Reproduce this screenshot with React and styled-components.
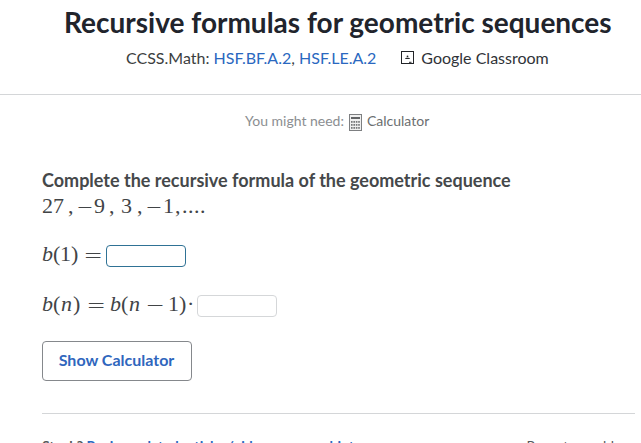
import React from 'react';
import styled, { createGlobalStyle } from 'styled-components';

const GlobalStyle = createGlobalStyle`
* {
  box-sizing: border-box;
}
body {
  margin: 0;
  background: #fff;
  overflow: hidden;
  font-family: Lato, sans-serif;
}
`;

const Page = styled.div`
height: 443px;
overflow: hidden;
color: #3b3e40;
`;

const Header = styled.header`
height: 95px;
padding-left: 64px;
border-bottom: 1px solid #d4d6d8;
white-space: nowrap;
`;

const Title = styled.h1`
margin: 0;
padding-top: 4px;
font-size: 28px;
font-weight: 700;
line-height: 36px;
color: #21242c;
`;

const Meta = styled.div`
display: flex;
align-items: center;
margin: 8px 0 0 62px;
font-size: 16px;
line-height: 20px;
`;

const Link = styled.a`
color: #2a68c0;
text-decoration: none;
`;

const Classroom = styled.div`
display: flex;
align-items: center;
gap: 6px;
margin-left: 24px;
color: #303338;
`;

const Need = styled.div`
display: flex;
align-items: center;
height: 20px;
margin: 17px 0 0 245px;
font-size: 14px;
line-height: 18px;
white-space: nowrap;
color: #8b8e91;
`;

const Tool = styled.span`
display: flex;
align-items: center;
gap: 5px;
margin-left: 4px;
color: #6b6e70;
`;

const Label = styled.span`
padding-bottom: 2px;
`;

const Exercise = styled.main`
padding-left: 42px;
`;

const Prompt = styled.p`
margin: 37px 0 0;
font-size: 18px;
font-weight: 700;
line-height: 22px;
color: #45484a;
white-space: nowrap;
`;

const Formula = styled.div`
display: flex;
align-items: center;
height: 24px;
margin-top: ${props => props.$top}px;
font-family: "Liberation Serif", serif;
font-size: 22px;
line-height: 24px;
color: #414446;
`;

const Term = styled.span`
flex: none;
width: ${props => props.$w}px;
white-space: nowrap;
font-style: ${props => (props.$italic ? 'italic' : 'normal')};
letter-spacing: ${props => props.$spacing || 0}px;
`;

const Operator = styled(Term)`
font-family: Lato, sans-serif;
font-weight: 300;
font-size: 28px;
transform: scaleX(${props => props.$stretch || 1.25});
transform-origin: left;
`;

const Answer = styled.input`
width: 80px;
height: 22px;
margin-top: 3px;
padding: 0 4px;
border: 1px solid ${props => (props.$active ? '#2f7295' : '#d5d7d9')};
border-radius: 4px;
background: #fff;
outline: none;
`;

const Button = styled.button`
display: block;
width: 150px;
height: 40px;
margin-top: 25px;
padding: 0 1px 4px 0;
border: 1px solid #85888c;
border-radius: 4px;
background: #fff;
color: #2f66bd;
font-family: Lato, sans-serif;
font-size: 16px;
font-weight: 700;
`;

const Footer = styled.footer`
display: flex;
justify-content: space-between;
width: 593px;
margin-top: 32px;
padding-top: 22px;
border-top: 1px solid #d4d6d8;
font-size: 14px;
line-height: 20px;
white-space: nowrap;
color: #55585a;
`;

const Help = styled.div`
font-weight: 700;
`;

const Report = styled.div`
margin-right: 2px;
`;

function ClassroomIcon() {
  return (
    <svg width="15" height="14" viewBox="0 0 15 14">
      <rect x="1.5" y="0.5" width="12" height="12" fill="none" stroke="#222428" />
      <circle cx="7.5" cy="5.3" r="0.9" fill="#25272a" />
      <path d="M5 8c0-1.8 5-1.8 5 0z" fill="#25272a" />
      <path d="M9 11.3h2.5" stroke="#25272a" />
    </svg>
  );
}

function CalculatorIcon() {
  return (
    <svg width="14" height="17" viewBox="0 0 14 17">
      <rect x="1.5" y="0.5" width="12" height="16" fill="#f0f0f0" stroke="#7d7f81" />
      <rect x="3" y="3" width="9" height="2" fill="#626466" />
      {[7, 10, 13].map(y => [3, 5.4, 7.8, 10.2].map(x => (
        <rect key={x + '-' + y} x={x} y={y} width="1.6" height="1.8" fill="#77797b" />
      )))}
    </svg>
  );
}

function App() {
  return (
    <Page>
      <GlobalStyle />
      <Header>
        <Title>Recursive formulas for geometric sequences</Title>
        <Meta>
          <span>CCSS.Math: <Link>HSF.BF.A.2</Link>, <Link>HSF.LE.A.2</Link></span>
          <Classroom><ClassroomIcon />Google Classroom</Classroom>
        </Meta>
      </Header>

      <Need>
        <Label>You might need:</Label>
        <Tool><CalculatorIcon /><Label>Calculator</Label></Tool>
      </Need>

      <Exercise>
        <Prompt>Complete the recursive formula of the geometric sequence</Prompt>
        <Formula $top={3}>
          <Term $w={26}>27</Term>
          <Term $w={8}>,</Term>
          <Operator $w={18} $stretch={1.1}>−</Operator>
          <Term $w={15}>9</Term>
          <Term $w={12}>,</Term>
          <Term $w={16}>3</Term>
          <Term $w={8}>,</Term>
          <Operator $w={18} $stretch={1.1}>−</Operator>
          <Term $w={12}>1</Term>
          <Term $w={7}>,</Term>
          <Term $w={24} $spacing={0.5}>....</Term>
        </Formula>

        <Formula $top={24}>
          <Term $w={11} $italic>b</Term>
          <Term $w={7}>(</Term>
          <Term $w={11}>1</Term>
          <Term $w={12}>)</Term>
          <Operator $w={23}>=</Operator>
          <Answer $active />
        </Formula>

        <Formula $top={26}>
          <Term $w={11} $italic>b</Term>
          <Term $w={8}>(</Term>
          <Term $w={12} $italic>n</Term>
          <Term $w={13}>)</Term>
          <Operator $w={24}>=</Operator>
          <Term $w={11} $italic>b</Term>
          <Term $w={8}>(</Term>
          <Term $w={16} $italic>n</Term>
          <Operator $w={23}>−</Operator>
          <Term $w={11}>1</Term>
          <Term $w={8}>)</Term>
          <Term $w={10}>·</Term>
          <Answer />
        </Formula>

        <Button>Show Calculator</Button>

        <Footer>
          <Help>Stuck? <Link>Review related articles/videos or use a hint.</Link></Help>
          <Report>Report a problem</Report>
        </Footer>
      </Exercise>
    </Page>
  );
}

export default App;
